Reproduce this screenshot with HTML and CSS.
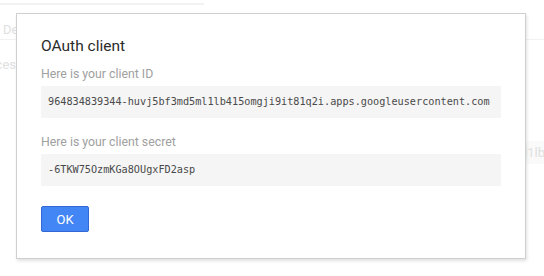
FILE: index.html
```
<!DOCTYPE html>
<html lang="en">
<head>
    <meta charset="UTF-8">
    <meta name="viewport" content="width=device-width, initial-scale=1.0">
    <title>OAuth client</title>
    <link rel="stylesheet" href="styles.css">
</head>
<body>
    <div class="page">
        <div class="top-line"></div>
        <div class="tab">Details</div>
        <div class="section-label">Sources</div>
        <div class="id-row">l1lb415omgji9it81q2i</div>
    </div>

    <div class="dialog">
        <h2 class="dialog-title">OAuth client</h2>

        <div class="field-label">Here is your client ID</div>
        <div class="code-box">964834839344-huvj5bf3md5ml1lb415omgji9it81q2i.apps.googleusercontent.com</div>

        <div class="field-label">Here is your client secret</div>
        <div class="code-box">-6TKW75OzmKGa8OUgxFD2asp</div>

        <button class="ok-button">OK</button>
    </div>
</body>
</html>
```

FILE: styles.css
```
body {
    margin: 0;
    background-color: #fff;
    font-family: 'Roboto', 'Noto Sans', sans-serif;
    width: 544px;
    height: 276px;
    overflow: hidden;
    position: relative;
}

/* faded page behind the dialog */
.page {
    color: #e0e0e0;
    font-size: 13px;
}

.top-line {
    width: 204px;
    height: 2px;
    margin-top: 3px;
    background-color: #f2f2f2;
}

.tab {
    height: 19px;
    margin-top: 15px;
    padding-left: 3px;
    line-height: 19px;
    border-bottom: 1px solid #f2f2f2;
}

.section-label {
    margin-top: 16px;
    margin-left: -31px;
    line-height: 18px;
}

.id-row {
    margin-top: 67px;
    margin-left: 524px;
    height: 23px;
    line-height: 23px;
    white-space: nowrap;
    overflow: hidden;
    background-color: #fafafa;
    font-size: 13px;
}

/* dialog */
.dialog {
    position: absolute;
    left: 16px;
    top: 13px;
    width: 460px;
    height: 194px;
    padding: 20px 24px 30px 24px;
    background-color: #fff;
    border: 1px solid #cfcfcf;
    box-shadow: 1px 2px 3px rgba(0, 0, 0, 0.12);
}

.dialog-title {
    margin: 0;
    font-size: 15.5px;
    font-weight: 400;
    color: #2b2b2b;
    line-height: 24px;
}

.field-label {
    margin-top: 8px;
    font-size: 12.3px;
    color: #a0a0a0;
    line-height: 16px;
    height: 16px;
}

.code-box {
    margin-top: 4px;
    height: 32px;
    padding-left: 7px;
    line-height: 32px;
    background-color: #f5f5f5;
    font-family: 'DejaVu Sans Mono', monospace;
    font-size: 10.2px;
    color: #4a4a4a;
    white-space: nowrap;
}

.code-box + .field-label {
    margin-top: 16px;
}

.ok-button {
    display: block;
    margin-top: 20px;
    width: 48px;
    height: 26px;
    padding: 0;
    background-color: #4285f4;
    border: 1px solid #3367d6;
    border-radius: 2px;
    color: #fff;
    font-family: 'Roboto', sans-serif;
    font-size: 13px;
    cursor: pointer;
}

.ok-button:hover {
    background-color: #3b78e7;
}
```
